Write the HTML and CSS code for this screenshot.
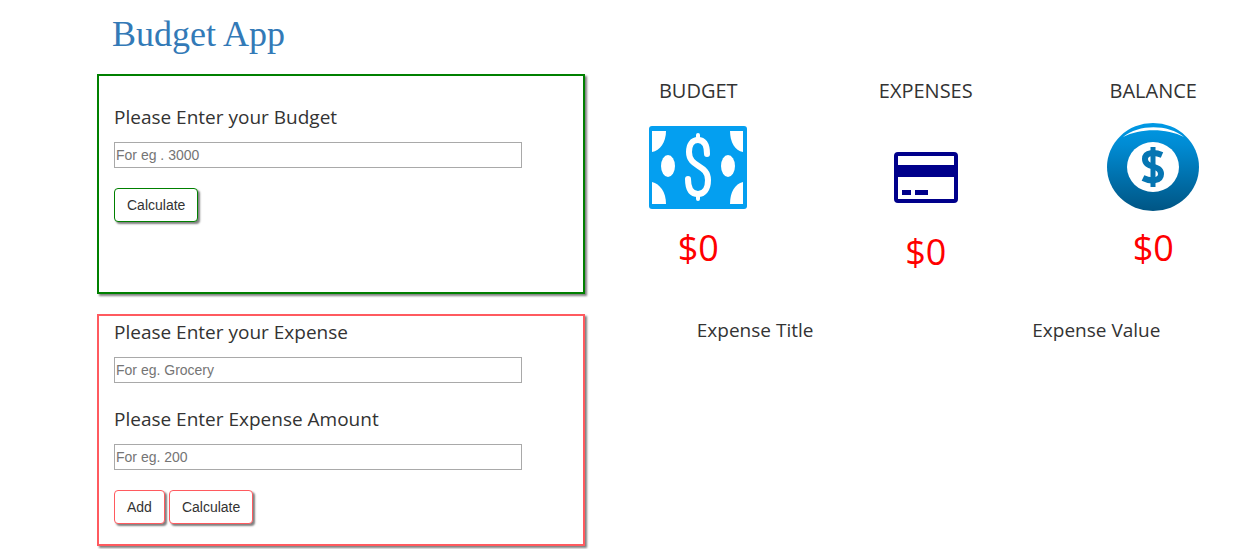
FILE: index.html
```html
<!DOCTYPE html>
<html lang="en">
<head>
<meta charset="utf-8">
<title>Budget App</title>
<link rel="stylesheet" href="styles.css">
</head>
<body>
<div class="page">
  <h1 class="title">Budget App</h1>
  <main class="layout">
    <div class="forms">
      <form class="card card-budget">
        <label class="label" for="budget">Please Enter your Budget</label>
        <input class="field" id="budget" type="text" placeholder="For eg . 3000">
        <div class="actions"><button class="btn" type="button">Calculate</button></div>
      </form>
      <form class="card card-expense">
        <label class="label" for="expense">Please Enter your Expense</label>
        <input class="field" id="expense" type="text" placeholder="For eg. Grocery">
        <label class="label label-next" for="amount">Please Enter Expense Amount</label>
        <input class="field" id="amount" type="text" placeholder="For eg. 200">
        <div class="actions">
          <button class="btn" type="button">Add</button>
          <button class="btn" type="button">Calculate</button>
        </div>
      </form>
    </div>
    <div class="results">
      <div class="summary">
        <section class="stat">
          <h2 class="stat-name">BUDGET</h2>
          <svg class="stat-icon" viewBox="0 0 100 100" aria-hidden="true">
            <rect x="1" y="8" width="98" height="83" rx="3" fill="#049ff0"/>
            <g fill="#fff">
              <path d="M4 13H18C18 24 12 33 4 34Z"/>
              <path d="M95 13H82C82 24 87 33 95 34Z"/>
              <path d="M4 86H18C18 74 12 66 4 64Z"/>
              <path d="M95 86H82C82 74 87 66 95 64Z"/>
              <ellipse cx="20" cy="48" rx="7" ry="11"/>
              <ellipse cx="80" cy="48" rx="7" ry="11"/>
            </g>
            <path d="M59 36C59 27 56 22 50 22C44 22 41 27 41 34C41 50 60 46 60 62C60 71 56 76 50 76C43 76 40 70 40 61" fill="none" stroke="#fff" stroke-width="6" stroke-linecap="round"/>
            <path d="M50 17V22M50 76V81" fill="none" stroke="#fff" stroke-width="4" stroke-linecap="round"/>
          </svg>
          <p class="stat-value">$0</p>
        </section>
        <section class="stat">
          <h2 class="stat-name">EXPENSES</h2>
          <svg class="stat-icon stat-icon-card" viewBox="0 0 100 104" aria-hidden="true">
            <rect x="20" y="36" width="60" height="47" rx="2" fill="none" stroke="#00008b" stroke-width="4"/>
            <path d="M18 47H82V59H18ZM26 72H35V77H26ZM39 72H52V77H39Z" fill="#00008b"/>
          </svg>
          <p class="stat-value">$0</p>
        </section>
        <section class="stat">
          <h2 class="stat-name">BALANCE</h2>
          <svg class="stat-icon" viewBox="0 0 100 100" aria-hidden="true">
            <defs><linearGradient id="coin" x1="0" y1="0" x2="0" y2="1"><stop offset="0" stop-color="#0099e5"/><stop offset=".25" stop-color="#008bd3"/><stop offset="1" stop-color="#005584"/></linearGradient></defs>
            <ellipse cx="50" cy="49" rx="46" ry="44" fill="url(#coin)"/>
            <path d="M20 19C36 6 65 6 81 19C64 10 37 10 20 19Z" fill="#fff"/>
            <ellipse cx="50" cy="49" rx="26" ry="25" fill="#fff"/>
            <g fill="none" stroke="#0575b2">
              <path d="M59 37C52 34 42 34 42 41C42 51 58 46 58 56C58 63 48 64 40 60" stroke-width="6"/>
              <path d="M50 29V69" stroke-width="5"/>
            </g>
          </svg>
          <p class="stat-value">$0</p>
        </section>
      </div>
      <table class="expenses">
        <thead><tr><th scope="col">Expense Title</th><th scope="col">Expense Value</th></tr></thead>
      </table>
    </div>
  </main>
</div>
</body>
</html>
```
FILE: styles.css
```css
* { box-sizing: border-box; }

body {
  margin: 0;
  min-height: 100vh;
  background: #fff;
  color: #333;
  font-family: "Open Sans", "Noto Sans", sans-serif;
  font-size: 19px;
  overflow-x: hidden;
}

.page {
  margin: 0 -29px 0 97px;
  padding-bottom: 12px;
}

.title {
  margin: 0;
  padding: 14px 15px 20px;
  color: #337ab7;
  font: 400 36px/40px "Liberation Serif", serif;
}

.layout {
  display: grid;
  grid-template-columns: 5fr 7fr;
}

.forms {
  display: flex;
  flex-direction: column;
  gap: 20px;
}

.card {
  padding: 0 15px 20px;
  border: 2px solid;
  box-shadow: 2px 2px 2px #808080;
}

.card-budget {
  padding-top: 29px;
  padding-bottom: 70px;
  border-color: green;
}

.card-expense { border-color: #ff5a5f; }

.label {
  display: block;
  margin-bottom: 13px;
  line-height: 24px;
}

.card-expense .label { padding-top: 4px; }
.card-expense .label-next { padding-top: 24px; }

.field {
  display: block;
  width: 90%;
  height: 26px;
  padding: 1px;
  border: 1px solid #a9a9a9;
  background: #fff;
  color: #333;
  font: 14px/20px "Liberation Sans", Arial, sans-serif;
}

.field::placeholder { color: #757575; }

.actions {
  display: flex;
  gap: 4px;
  margin-top: 20px;
}

.btn {
  padding: 6px 12px;
  border: 1px solid green;
  border-radius: 4px;
  background: #fff;
  box-shadow: 2px 2px 2px #808080;
  color: #333;
  font: 14px/20px "Liberation Sans", Arial, sans-serif;
}

.card-expense .btn { border-color: #ff5a5f; }

.summary {
  display: grid;
  grid-template-columns: repeat(3, 1fr);
}

.stat { text-align: center; }

.stat-name {
  margin: 4px 0 14px;
  font-size: 20px;
  font-weight: 400;
  line-height: 26px;
}

.stat-icon {
  display: block;
  width: 100px;
  height: 100px;
  margin: 0 auto;
}

.stat-icon-card { height: 104px; }

.stat-value {
  margin: 8px 0 0;
  color: red;
  font-size: 36px;
  line-height: 44px;
}

.expenses {
  width: 100%;
  margin-top: 44px;
  border-collapse: collapse;
  table-layout: fixed;
}

.expenses th {
  padding: 0;
  font-weight: 400;
  line-height: 24px;
}
```
